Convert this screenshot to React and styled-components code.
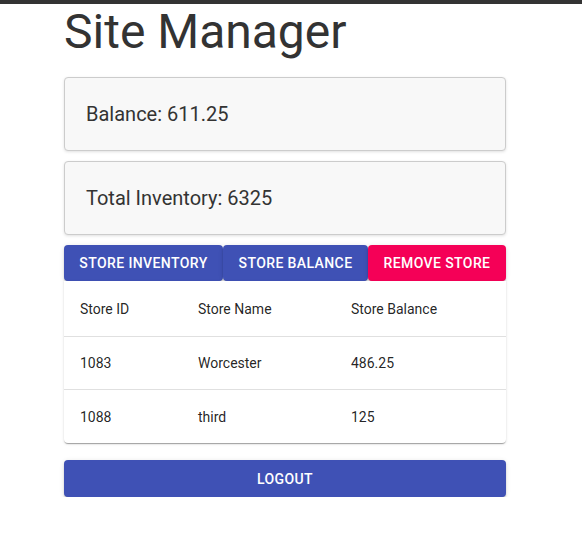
import React from 'react'
import styled, { createGlobalStyle } from 'styled-components'

const GlobalStyle = createGlobalStyle`
    body {
        margin: 0;
        background: #ffffff;
        font-family: Roboto, "Helvetica Neue", Arial, sans-serif;
    }
`;

const TopBar = styled.div`
    height: 4px;
    background-color: #333333;
`;

const StyledMain = styled.main`
    width: 442px;
    margin-left: 64px;
    display: flex;
    flex-direction: column;
`;

const StyledTitle = styled.h1`
    margin: 0;
    font-size: 48px;
    font-weight: 400;
    line-height: 56px;
    color: #333333;
`;

const StyledInfoCard = styled.section`
    margin-top: ${props => props.$top || '10px'};
    height: 72px;
    display: flex;
    align-items: center;
    padding-left: 21px;
    background-color: #f8f8f8;
    border: 1px solid #cccccc;
    border-radius: 4px;
    box-shadow: 0 1px 3px rgba(0, 0, 0, 0.12);
    font-size: 20px;
    color: #333333;
`;

const StyledButtonRow = styled.div`
    margin-top: 10px;
    display: flex;
`;

const StyledButton = styled.button`
    flex: ${props => props.$flex || 'none'};
    width: ${props => props.$width || 'auto'};
    height: ${props => props.$height || '36px'};
    border: none;
    border-radius: 4px;
    padding: 0 8px;
    white-space: nowrap;
    background-color: ${props => props.$color || '#3f51b5'};
    color: #ffffff;
    font-family: Roboto, sans-serif;
    font-size: 14px;
    font-weight: 500;
    letter-spacing: 0.02857em;
    text-transform: uppercase;
    box-shadow: 0 3px 1px -2px rgba(0,0,0,0.2), 0 2px 2px 0 rgba(0,0,0,0.14), 0 1px 5px 0 rgba(0,0,0,0.12);
    cursor: pointer;
`;

const StyledTable = styled.div`
    background: #ffffff;
    border-radius: 0 0 4px 4px;
    box-shadow: 0 2px 1px -1px rgba(0,0,0,0.2), 0 1px 1px 0 rgba(0,0,0,0.14), 0 1px 3px 0 rgba(0,0,0,0.12);
`;

const StyledRow = styled.div`
    display: grid;
    grid-template-columns: 118px 153px 1fr;
    height: ${props => props.$head ? '56px' : '53px'};
    align-items: center;
    border-bottom: ${props => props.$last ? 'none' : '1px solid #e0e0e0'};
    box-sizing: border-box;
`;

const StyledCell = styled.div`
    padding-left: 16px;
    font-size: 14px;
    color: rgba(0, 0, 0, 0.87);
`;

const StyledLogoutWrapper = styled.div`
    margin-top: 17px;
    display: flex;
`;

const stores = [
    { id: 1083, name: 'Worcester', balance: '486.25' },
    { id: 1088, name: 'third', balance: '125' }
];

const App = () => {
    return (
        <>
            <GlobalStyle />
            <TopBar />
            <StyledMain>
                <StyledTitle>Site Manager</StyledTitle>
                <StyledInfoCard $top="17px">Balance: 611.25</StyledInfoCard>
                <StyledInfoCard>Total Inventory: 6325</StyledInfoCard>
                <StyledButtonRow>
                    <StyledButton $width="159px">Store Inventory</StyledButton>
                    <StyledButton $width="145px">Store Balance</StyledButton>
                    <StyledButton $flex="1" $color="#f50057">Remove Store</StyledButton>
                </StyledButtonRow>
                <StyledTable>
                    <StyledRow $head>
                        <StyledCell>Store ID</StyledCell>
                        <StyledCell>Store Name</StyledCell>
                        <StyledCell>Store Balance</StyledCell>
                    </StyledRow>
                    {stores.map((store, i) => (
                        <StyledRow key={store.id} $last={i === stores.length - 1}>
                            <StyledCell>{store.id}</StyledCell>
                            <StyledCell>{store.name}</StyledCell>
                            <StyledCell>{store.balance}</StyledCell>
                        </StyledRow>
                    ))}
                </StyledTable>
                <StyledLogoutWrapper>
                    <StyledButton $flex="1" $height="37px">Logout</StyledButton>
                </StyledLogoutWrapper>
            </StyledMain>
        </>
    )
}

export default App;
